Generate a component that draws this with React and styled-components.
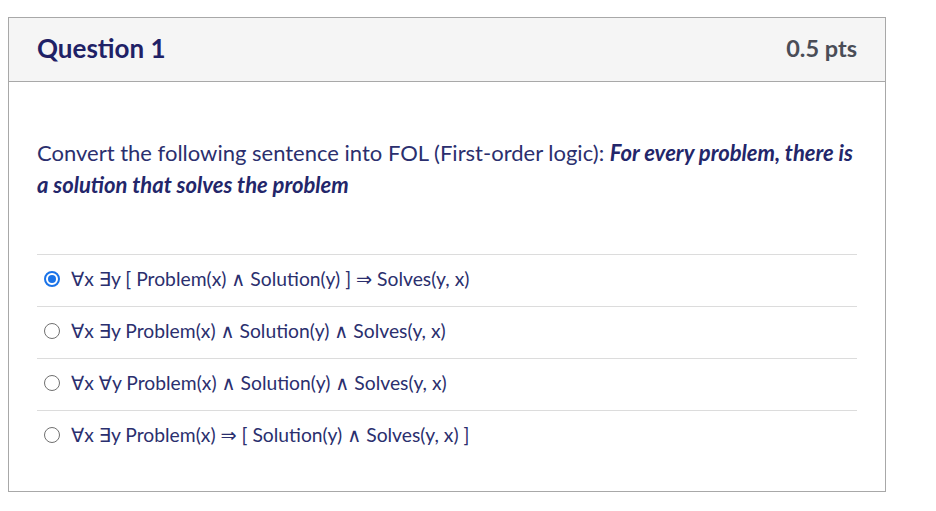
import React, {useState} from 'react'
import styled, {createGlobalStyle} from 'styled-components'

const GlobalStyle = createGlobalStyle`
    body {
        margin: 0;
        background: #ffffff;
        font-family: Lato, "Noto Sans", "DejaVu Sans", sans-serif;
    }
`;

const Page = styled.div`
    padding: 17px 0 0 8px;
`;

const Card = styled.div`
    width: 878px;
    box-sizing: border-box;
    border: 1px solid #a8a8a8;
`;

const Header = styled.div`
    display: flex;
    justify-content: space-between;
    align-items: center;
    height: 64px;
    padding: 0 28px 4px 28px;
    box-sizing: border-box;
    background: #f5f5f5;
    border-bottom: 1px solid #a8a8a8;
`;

const Title = styled.h2`
    margin: 0;
    font-size: 26px;
    font-weight: 700;
    color: #1f2166;
`;

const Points = styled.span`
    font-size: 23.5px;
    font-weight: 700;
    color: #4a4d57;
`;

const Body = styled.div`
    padding: 55px 28px 28px 28px;
`;

const Prompt = styled.p`
    margin: 0 0 53px 0;
    font-size: 22px;
    line-height: 32px;
    color: #2b2f6e;

    strong {
        font-weight: 700;
        font-style: italic;
        color: #23266a;
    }
`;

const Answers = styled.div`
    border-top: 1px solid #dcdcdc;
`;

const Answer = styled.label`
    display: flex;
    align-items: center;
    gap: 11px;
    height: 52px;
    padding: 0 0 4px 7px;
    box-sizing: border-box;
    border-bottom: ${p => (p.$last ? 'none' : '1px solid #dcdcdc')};
    font-size: 19.3px;
    color: #2b2f6e;
    cursor: pointer;
`;

const Radio = styled.span`
    width: 16px;
    height: 16px;
    box-sizing: border-box;
    border-radius: 50%;
    border: ${p => (p.$on ? '2px solid #1a73e8' : '1.5px solid #707070')};
    display: flex;
    align-items: center;
    justify-content: center;
    flex-shrink: 0;

    &::after {
        content: '';
        width: 8px;
        height: 8px;
        border-radius: 50%;
        background: ${p => (p.$on ? '#1a73e8' : 'transparent')};
    }
`;

const options = [
    '∀x ∃y [ Problem(x) ∧ Solution(y) ] ⇒ Solves(y, x)',
    '∀x ∃y Problem(x) ∧ Solution(y) ∧ Solves(y, x)',
    '∀x ∀y Problem(x) ∧ Solution(y) ∧ Solves(y, x)',
    '∀x ∃y Problem(x) ⇒ [ Solution(y) ∧ Solves(y, x) ]',
]

function App() {

    const [picked, setPicked] = useState(0)

    return (
        <Page>
            <GlobalStyle />
            <Card>
                <Header>
                    <Title>Question 1</Title>
                    <Points>0.5 pts</Points>
                </Header>
                <Body>
                    <Prompt>
                        Convert the following sentence into FOL (First-order logic): <strong>For every problem, there is a solution that solves the problem</strong>
                    </Prompt>
                    <Answers>
                        {options.map((o, i) => (
                            <Answer key={i} $last={i === options.length - 1} onClick={() => setPicked(i)}>
                                <Radio $on={picked === i} />
                                <span>{o}</span>
                            </Answer>
                        ))}
                    </Answers>
                </Body>
            </Card>
        </Page>
    )
}

export default App;
